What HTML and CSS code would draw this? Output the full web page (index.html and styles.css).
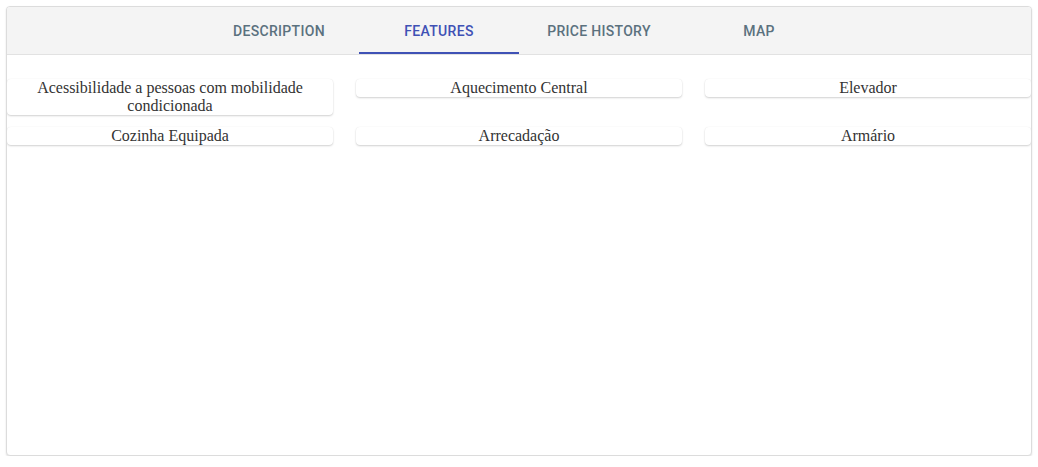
FILE: index.html
```html
<!DOCTYPE html>
<html lang="pt">
<head>
<meta charset="utf-8">
<title>Features</title>
<link rel="stylesheet" href="styles.css">
</head>
<body>
<div class="card">
  <div class="tabbar">
    <div class="tab">Description</div>
    <div class="tab active">Features</div>
    <div class="tab">Price History</div>
    <div class="tab">Map</div>
  </div>
  <div class="content">
    <div class="features">
      <div class="feature">Acessibilidade a pessoas com mobilidade condicionada</div>
      <div class="feature">Aquecimento Central</div>
      <div class="feature">Elevador</div>
      <div class="feature">Cozinha Equipada</div>
      <div class="feature">Arrecadação</div>
      <div class="feature">Armário</div>
    </div>
  </div>
</div>
</body>
</html>
```

FILE: styles.css
```css
html, body {
  margin: 0;
  padding: 0;
  background: #ffffff;
}

body {
  padding: 6px 6px 0 6px;
}

.card {
  width: 1026px;
  height: 450px;
  box-sizing: border-box;
  border: 1px solid #dcdcdc;
  border-radius: 4px;
  box-shadow: 0 1px 2px rgba(0, 0, 0, 0.12);
  background: #ffffff;
  overflow: hidden;
  display: flex;
  flex-direction: column;
}

.tabbar {
  display: flex;
  justify-content: center;
  background: #f4f4f4;
  border-bottom: 1px solid #e2e2e2;
  height: 47px;
  flex: none;
}

.tab {
  width: 160px;
  height: 47px;
  display: flex;
  align-items: center;
  justify-content: center;
  font-family: Roboto, "Liberation Sans", sans-serif;
  font-weight: 500;
  font-size: 14px;
  letter-spacing: 0.3px;
  text-transform: uppercase;
  color: #5b717e;
  box-sizing: border-box;
  padding-top: 1px;
}

.tab.active {
  color: #3f51b5;
  box-shadow: inset 0 -2px 0 #3f51b5;
}

.content {
  padding-top: 24px;
}

.features {
  display: grid;
  grid-template-columns: repeat(3, 1fr);
  column-gap: 23px;
  row-gap: 12px;
  align-items: start;
}

.feature {
  background: #ffffff;
  border-radius: 4px;
  box-shadow: 0 1px 2px rgba(0, 0, 0, 0.18), 0 0 1px rgba(0, 0, 0, 0.08);
  text-align: center;
  font-family: "Liberation Serif", "Times New Roman", serif;
  font-size: 16px;
  line-height: 18px;
  color: #333333;
}
```
